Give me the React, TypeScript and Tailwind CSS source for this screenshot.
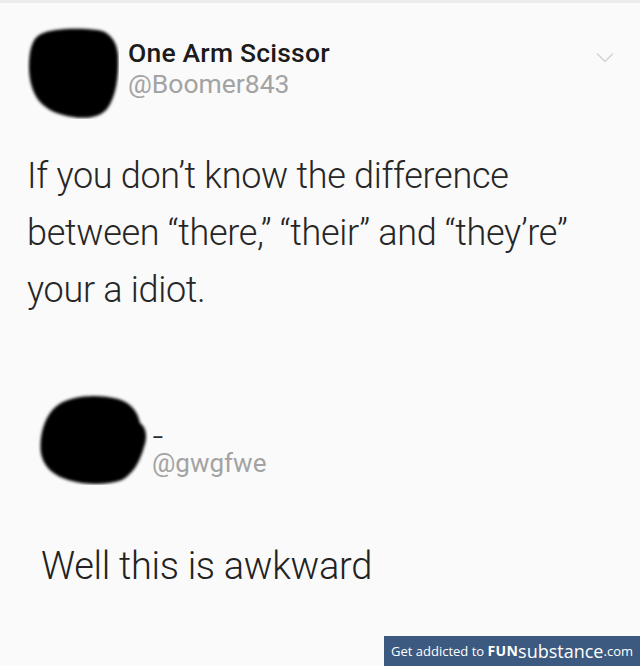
import React from 'react';

const Blob = ({ d, w, h }: { d: string; w: number; h: number }) => (
  <svg width={w} height={h} viewBox={`0 0 ${w} ${h}`} className="shrink-0">
    <defs>
      <filter id={`soft${w}`} x="-10%" y="-10%" width="120%" height="120%">
        <feGaussianBlur stdDeviation="1.4" />
      </filter>
    </defs>
    <path d={d} fill="#050505" filter={`url(#soft${w})`} />
  </svg>
);

const Chevron = () => (
  <svg width="18" height="12" viewBox="0 0 18 12" fill="none">
    <path d="M1.5 2 L9 9.5 L16.5 2" stroke="#d4d4d4" strokeWidth="1.6" strokeLinecap="round" strokeLinejoin="round" />
  </svg>
);

export default function App() {
  return (
    <div className="w-[640px] h-[666px] bg-[#fafafa] flex flex-col overflow-hidden border-t-[3px] border-[#ececec]" style={{ fontFamily: 'Roboto, "Liberation Sans", sans-serif' }}>
      <div className="flex items-start pl-[27px] pr-[26px] pt-[22px]">
        <Blob
          w={92}
          h={94}
          d="M14 9 C26 3 52 3 70 5 C82 6 90 16 91 30 C92 52 89 72 80 84 C72 93 58 94 46 92 C32 90 22 86 14 78 C6 70 2 56 2 42 C2 26 5 13 14 9 Z"
        />
        <div className="ml-[9px] pt-[13px] flex-1 flex flex-col">
          <span className="text-[26.5px] leading-[30px] text-[#1b1b1b] font-medium tracking-[0.2px]">One Arm Scissor</span>
          <span className="text-[26.5px] leading-[32px] text-[#a3a3a3]">@Boomer843</span>
        </div>
        <div className="pt-[27px]">
          <Chevron />
        </div>
      </div>

      <p className="mt-[29px] pl-[27px] pr-2 text-[36px] leading-[57px] font-light text-[#262626] tracking-[-0.3px] whitespace-nowrap">
        If you don’t know the difference
        <br />
        between “there,” “their” and “they’re”
        <br />
        your a idiot.
      </p>

      <div className="mt-[74px] flex items-start pl-[38px]">
        <Blob
          w={110}
          h={92}
          d="M20 12 C34 2 60 1 80 6 C94 10 100 20 102 30 C108 34 110 44 106 54 C102 68 96 80 84 87 C70 92 48 92 34 88 C18 84 6 76 3 60 C1 44 6 22 20 12 Z"
        />
        <div className="ml-[4px] pt-[34px] flex flex-col">
          <span className="text-[18px] leading-[22px] text-[#2a2a2a] font-medium">–</span>
          <span className="text-[26px] leading-[28px] text-[#a3a3a3]">@gwgfwe</span>
        </div>
      </div>

      <p className="mt-[59px] pl-[41px] text-[38px] leading-[44px] font-light text-[#222] tracking-[-0.3px]">Well this is awkward</p>

      <div className="flex-1" />

      <div className="flex justify-end">
        <div className="w-[256px] h-[30px] bg-[#3c5a80] flex items-center justify-center text-white leading-none whitespace-nowrap" style={{ fontFamily: '"Open Sans", "Noto Sans", sans-serif' }}>
          <span className="text-[13px]">Get addicted to&nbsp;</span>
          <span className="text-[14px] font-bold tracking-[0.3px]">FUN</span>
          <span className="text-[18px]">substance</span>
          <span className="text-[13px]">.com</span>
        </div>
      </div>
    </div>
  );
}
